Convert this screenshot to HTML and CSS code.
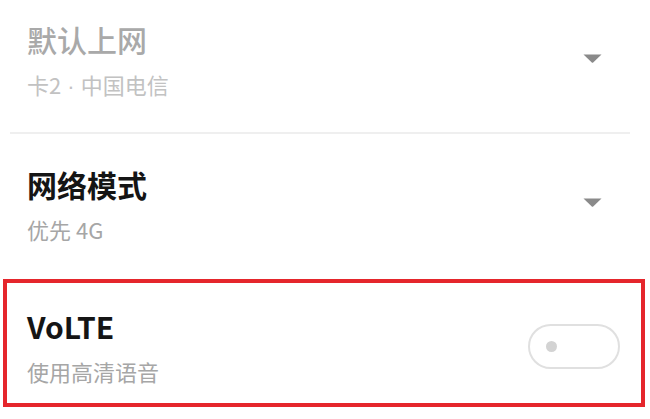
FILE: index.html
```html
<!DOCTYPE html>
<html lang="zh-CN">
<head>
<meta charset="utf-8">
<title>移动网络设置</title>
<link rel="stylesheet" href="styles.css">
</head>
<body>
<div class="list">
  <div class="row row-first">
    <div class="texts">
      <div class="title title-disabled">默认上网</div>
      <div class="sub sub-disabled">卡2<span class="sep"> · </span>中国电信</div>
    </div>
    <svg class="arrow" width="19" height="9" viewBox="0 0 19 9"><path d="M0.5 0.5 H18.5 L10.2 8.4 Q9.5 9 8.8 8.4 Z" fill="#8a8a8a"/></svg>
  </div>
  <div class="divider"></div>
  <div class="row row-second">
    <div class="texts">
      <div class="title">网络模式</div>
      <div class="sub">优先 4G</div>
    </div>
    <svg class="arrow" width="19" height="9" viewBox="0 0 19 9"><path d="M0.5 0.5 H18.5 L10.2 8.4 Q9.5 9 8.8 8.4 Z" fill="#8a8a8a"/></svg>
  </div>
  <div class="row row-volte">
    <div class="texts">
      <div class="title">VoLTE</div>
      <div class="sub">使用高清语音</div>
    </div>
    <div class="switch"><span class="knob"></span></div>
  </div>
</div>
</body>
</html>
```

FILE: styles.css
```css
html, body {
  margin: 0;
  padding: 0;
  background: #ffffff;
}

body {
  width: 650px;
  height: 419px;
  overflow: hidden;
  font-family: "Noto Sans CJK SC", "Noto Sans", sans-serif;
}

.list {
  display: flex;
  flex-direction: column;
}

.row {
  display: flex;
  align-items: center;
  justify-content: space-between;
  box-sizing: border-box;
  padding-left: 27px;
}

.texts {
  display: flex;
  flex-direction: column;
  gap: 13px;
}

.title {
  font-size: 30px;
  line-height: 36px;
  font-weight: 700;
  color: #151515;
}

.title-disabled {
  font-weight: 500;
  color: #a9a9a9;
}

.sub {
  font-size: 22px;
  line-height: 28px;
  color: #a6a6a6;
}

.sub-disabled {
  color: #c2c2c2;
}

.sep {
  font-family: "Liberation Sans", Arial, sans-serif;
}

.row-first {
  height: 132px;
  padding-top: 22px;
  padding-bottom: 33px;
  padding-right: 48px;
}

.row-second {
  height: 145px;
  padding-top: 32px;
  padding-bottom: 36px;
  padding-right: 48px;
}

.arrow {
  display: block;
  margin-bottom: 4px;
}

.divider {
  height: 2px;
  margin: 0 20px 0 10px;
  background: #efefef;
}

.row-volte {
  height: 128px;
  margin: 0 5px 0 3px;
  border: 4px solid #e5262c;
  padding-left: 20px;
  padding-top: 25px;
  padding-bottom: 19px;
  padding-right: 21px;
}

.switch {
  box-sizing: border-box;
  width: 92px;
  height: 45px;
  border: 2px solid #e0e0e0;
  border-radius: 23px;
  display: flex;
  align-items: center;
  padding-left: 16px;
}

.knob {
  width: 11px;
  height: 11px;
  border-radius: 50%;
  background: #d3d3d3;
}
```
